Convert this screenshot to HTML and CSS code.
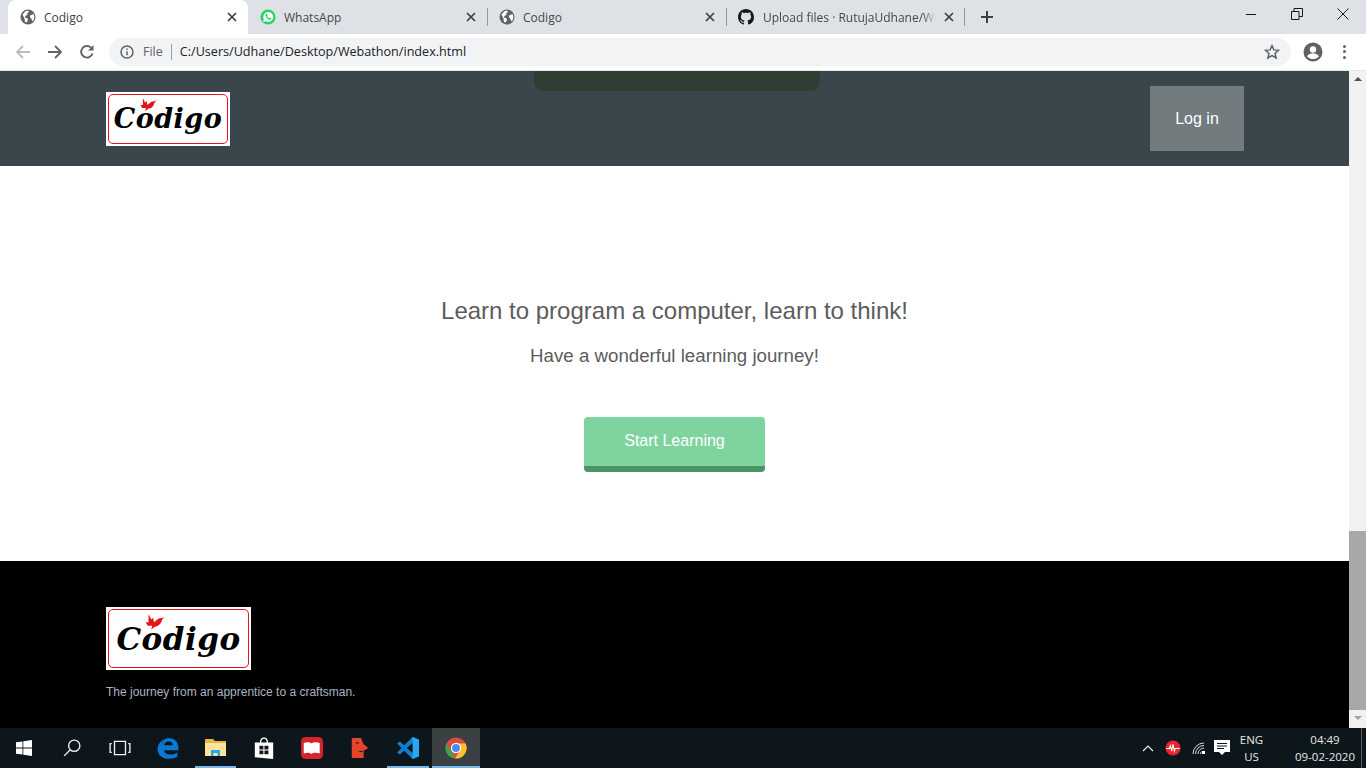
FILE: index.html
```html
<!DOCTYPE html>
<html lang="en">
<head>
<meta charset="utf-8">
<title>Codigo</title>
<link rel="stylesheet" href="styles.css">
</head>
<body>
<div class="tabstrip">
  <div class="tab active">
    <svg class="fav" viewBox="0 0 16 16"><use href="#globe"/></svg>
    <span class="tab-title">Codigo</span>
    <svg class="tab-x" viewBox="0 0 10 10"><path d="M1 1l8 8M9 1l-8 8"/></svg>
  </div>
  <div class="tab">
    <svg class="fav" viewBox="0 0 16 16"><circle cx="8" cy="8" r="7.6" fill="#25d366"/><path d="M3 13l.8-2.9A5 5 0 1 1 5.800 12.300z" fill="#fff"/><path d="M6.200 4.800c-.9.600-.9 2 .2 3.500 1.200 1.700 2.800 2.700 4 2.300.7-.3 1.100-1 .9-1.400l-1.400-.8-.7.700c-.8-.2-1.700-1.100-2.100-2.100l.6-.7-.7-1.500z" fill="#25d366"/></svg>
    <span class="tab-title">WhatsApp</span>
    <svg class="tab-x" viewBox="0 0 10 10"><path d="M1 1l8 8M9 1l-8 8"/></svg>
  </div>
  <div class="tab sep">
    <svg class="fav" viewBox="0 0 16 16"><use href="#globe"/></svg>
    <span class="tab-title">Codigo</span>
    <svg class="tab-x" viewBox="0 0 10 10"><path d="M1 1l8 8M9 1l-8 8"/></svg>
  </div>
  <div class="tab sep end">
    <svg class="fav" viewBox="0 0 16 16"><path fill="#16181a" d="M8 0C3.580 0 0 3.580 0 8c0 3.540 2.290 6.530 5.470 7.590.4.070.55-.17.55-.38 0-.19-.01-.82-.01-1.490-2.010.37-2.530-.49-2.690-.94-.09-.23-.48-.94-.82-1.130-.28-.15-.68-.52-.01-.53.63-.01 1.080.58 1.230.82.720 1.210 1.870.870 2.330.660.070-.520.280-.870.510-1.070-1.780-.2-3.640-.890-3.640-3.950 0-.870.310-1.590.820-2.150-.080-.2-.360-1.020.080-2.120 0 0 .670-.210 2.200.820.640-.180 1.320-.270 2-.270s1.360.090 2 .270c1.530-1.040 2.200-.820 2.200-.820.440 1.100.160 1.920.080 2.120.510.560.820 1.270.820 2.150 0 3.070-1.870 3.750-3.650 3.950.290.250.540.730.540 1.480 0 1.070-.01 1.930-.01 2.200 0 .210.150.460.550.380A8.010 8.010 0 0 0 16 8c0-4.420-3.580-8-8-8z"/></svg>
    <span class="tab-title clip">Upload files · RutujaUdhane/Web</span>
    <svg class="tab-x" viewBox="0 0 10 10"><path d="M1 1l8 8M9 1l-8 8"/></svg>
  </div>
  <svg class="newtab" viewBox="0 0 12 12"><path d="M6 0v12M0 6h12"/></svg>
  <div class="winctl">
    <svg class="wc" viewBox="0 0 12 12"><path d="M1 6.500h10"/></svg>
    <svg class="wc" viewBox="0 0 12 12"><path d="M.5 3.500h7.500v8h-7.500zM3 3.500v-3h8.500v8h-3.500"/></svg>
    <svg class="wc" viewBox="0 0 12 12"><path d="M.5 .5l11 11M11.500 .5l-11 11"/></svg>
  </div>
</div>

<div class="toolbar">
  <svg class="nav back" viewBox="0 0 16 16"><path d="M15 8H2M8 2L2 8l6 6"/></svg>
  <svg class="nav fwd" viewBox="0 0 16 16"><path d="M1 8h13M8 2l6 6-6 6"/></svg>
  <svg class="nav reload" viewBox="0 0 16 16"><path d="M13.500 9.500A5.800 5.800 0 1 1 12 3.600"/><path class="solid" d="M14.500 1v5.500H9z"/></svg>
  <div class="omnibox">
    <svg class="info" viewBox="0 0 14 14"><circle cx="7" cy="7" r="6"/><path d="M7 6.200v4M7 3.500v1.500"/></svg>
    <span class="file">File</span>
    <span class="omni-sep"></span>
    <span class="url">C:/Users/Udhane/Desktop/Webathon/index.html</span>
    <svg class="star" viewBox="0 0 16 16"><path d="M8 1.600l1.900 4.300 4.600.4-3.500 3.100 1.100 4.600L8 11.600l-4.100 2.400L5 9.400 1.500 6.300l4.600-.4z"/></svg>
  </div>
  <svg class="avatar" viewBox="0 0 20 20"><circle cx="10" cy="10" r="9.500" fill="#5f6368"/><circle cx="10" cy="7.500" r="3.200" fill="#fff"/><path d="M4 14.200c1.500-2.200 3.800-2.900 6-2.900s4.500.7 6 2.900c-1.400 1.800-3.600 2.900-6 2.900s-4.600-1.100-6-2.900z" fill="#fff"/></svg>
  <div class="menu"><i></i><i></i><i></i></div>
</div>

<div class="viewport">
  <div class="page">
    <header class="site-head">
      <div class="dropdown"></div>
      <div class="logo logo-sm">
        <span class="logo-text">Codigo</span>
        <svg class="bird" viewBox="0 0 24 22"><path fill="#e3141c" d="M6 0l3 6 2-2 1 5 5-4 5-1 2-1-3 3c-1 5-4 7-8 8l-4 3 1-4-5 0-2-4 3 0z"/></svg>
      </div>
      <button class="login">Log in</button>
    </header>
    <main class="hero">
      <h2 class="hero-title">Learn to program a computer, learn to think!</h2>
      <p class="hero-sub">Have a wonderful learning journey!</p>
      <a class="start">Start Learning</a>
    </main>
    <footer class="site-foot">
      <div class="logo logo-lg">
        <span class="logo-text">Codigo</span>
        <svg class="bird" viewBox="0 0 24 22"><path fill="#e3141c" d="M6 0l3 6 2-2 1 5 5-4 5-1 2-1-3 3c-1 5-4 7-8 8l-4 3 1-4-5 0-2-4 3 0z"/></svg>
      </div>
      <p class="tagline">The journey from an apprentice to a craftsman.</p>
    </footer>
  </div>
  <div class="scrollbar">
    <span class="arrow up"></span>
    <div class="track"><div class="thumb"></div></div>
    <span class="arrow down"></span>
  </div>
</div>

<div class="taskbar">
  <div class="tb-cell start-btn"><svg viewBox="0 0 16 16"><path fill="#fff" d="M0 2.300l6.500-.9v6.200H0zM7.300 1.300L16 0v7.600H7.300zM0 8.400h6.500v6.200L0 13.700zM7.300 8.400H16V16l-8.700-1.200z"/></svg></div>
  <div class="tb-cell"><svg viewBox="0 0 16 16" class="line"><circle cx="10" cy="6" r="5"/><path d="M6.300 9.700L1 15"/></svg></div>
  <div class="tb-cell"><svg viewBox="0 0 20 14" class="line wide"><path d="M5 1h10v12H5zM2.500 3H1v8h1.500M17.500 3H19v8h-1.500"/></svg></div>
  <div class="tb-cell"><svg viewBox="0 0 20 20"><path fill="#0a78d4" d="M10.500 1c5.500 0 9 3.700 9 9.500v1.500H6.500c.4 2.600 2.500 4 5.200 4 2.300 0 4.500-.6 6.800-2v4c-2.100 1.200-4.500 1.800-7.500 1.800C4.600 19.800 .5 16 .5 10.800c0-1.500.4-3 1.300-4.500C3 4 5.500 2.500 7.500 2 5.800 3.200 4.800 4.600 4.500 6c1.500-1.200 3.500-1.500 5-1.500-1.800 0-3 1.700-3 3h8c0-2.500-1.800-3.700-4-3.500C9 4 7 4.500 5 6 5.700 3 7.500 1 10.500 1z"/></svg></div>
  <div class="tb-cell open"><svg viewBox="0 0 22 20"><path fill="#e6b84c" d="M0 1h8l2 2h11v15H0z"/><path fill="#ffe39a" d="M0 5h21v13H0z"/><path fill="#29a8e0" d="M6 18v-6h9v6h-2.500v-3h-4v3z"/></svg></div>
  <div class="tb-cell"><svg viewBox="0 0 20 24"><path fill="#fff" d="M0 6h5.500c0-3.500 1.800-5.500 4.500-5.500s4.500 2 4.500 5.500H20v18L0 22zM7 6h6c0-2.500-1.200-4-3-4s-3 1.500-3 4z"/><path fill="#12191d" d="M5 9.500h4.300v4H5zM10.500 9.500h4.300v4h-4.300zM5 14.800h4.300v4H5zM10.500 14.800h4.300v4h-4.300z"/></svg></div>
  <div class="tb-cell"><svg viewBox="0 0 20 20"><rect width="20" height="20" rx="4" fill="#d5242b"/><path fill="#fff" d="M2.500 5.500c2.500-1 5.500-1 7 .5 1.500-1.500 4.500-1.500 7.500-.5v9.500c-3-1-6-.8-7.500.5-1.500-1.300-4.500-1.500-7-.5z"/></svg></div>
  <div class="tb-cell"><svg viewBox="0 0 20 24"><path fill="#e2452a" d="M1 1h10l3 7 5 4-5 3v8H1z"/><path fill="#3b1a12" d="M5 6.500c1-1.300 3-1.300 4 0-1 .8-3 .8-4 0zM8 15c2 .5 4 .5 6 0-1 2-5 2-6 0z"/></svg></div>
  <div class="tb-cell open-blue"><svg viewBox="0 0 24 24"><path fill="#0e7fd0" d="M17 0l7 3v18l-7 3-9-9-5 4-3-2 5-5-5-5 3-2 5 4z"/><path fill="#29a9ee" d="M17 6.500L10.500 12 17 17.500z"/><path fill="#2ca6ec" d="M17 0l7 3v18l-7 3z"/><path fill="#0a1419" d="M17 6.500L10.500 12 17 17.500z"/></svg></div>
  <div class="tb-cell active-app"><svg viewBox="0 0 24 24"><circle cx="12" cy="12" r="11.500" fill="#de4a3b"/><path fill="#2da94f" d="M1.600 7L7 16.500l4 7A11.500 11.500 0 0 1 1.600 7z"/><path fill="#fbc02d" d="M12 7h10.400A11.500 11.500 0 0 1 11 23.500L17 14z"/><circle cx="12" cy="12" r="5.600" fill="#fff"/><circle cx="12" cy="12" r="4.300" fill="#4a89f3"/></svg></div>
  <div class="tray">
    <svg class="chev" viewBox="0 0 12 7"><path d="M1 6l5-5 5 5"/></svg>
    <svg class="pulse" viewBox="0 0 18 18"><circle cx="9" cy="9" r="8.500" fill="#e8252c"/><path d="M1.500 9.500h3.500l1-3 1.500 6 1.500-8 1.500 8 1-3h5" fill="none" stroke="#fff" stroke-width="1.200"/></svg>
    <svg class="wifi" viewBox="0 0 14 14"><path d="M1 13a11 11 0 0 1 11-11M3.500 13a8.500 8.500 0 0 1 8.500-8.500M6 13a6 6 0 0 1 6-6M8.500 13a3.500 3.500 0 0 1 1-2.500" fill="none" stroke="#d8d8d8" stroke-width="1"/><rect x="10" y="10" width="3" height="3" fill="#fff"/></svg>
    <svg class="note" viewBox="0 0 16 16"><path fill="#fff" d="M0 0h16v12h-5l-3 3-3-3H0z"/><path stroke="#0b1418" stroke-width="1" d="M3 3.500h10M3 6h10M3 8.500h7"/></svg>
    <div class="lang">ENG<br>US</div>
    <div class="clock">04:49<br>09-02-2020</div>
    <span class="peek"></span>
  </div>
</div>

<svg class="defs" aria-hidden="true"><defs><g id="globe"><circle cx="8" cy="8" r="7.500" fill="#5f6368"/><path fill="#fff" d="M2.500 5.500l3-3.300 2.500-.7 1 1.500L7 4.500 7.500 6l-2 .8-.5 1.800 2.500.9.500 1.500-1.500 2.500-1.500-.5-.5-3.500zM10 6.500l3.500-1.500.8 2.500-.3 3-1.500 2-1-2.500-1.500-2z"/></g></defs></svg>
</body>
</html>
```
FILE: styles.css
```css
* { box-sizing: border-box; }
html, body { margin: 0; height: 768px; overflow: hidden; }
body { display: flex; flex-direction: column; width: 1366px; font-family: "Liberation Sans", Arial, sans-serif; background: #fff; }
.defs { width: 0; height: 0; position: absolute; }

.tabstrip { height: 34px; background: #dee1e6; display: flex; align-items: stretch; padding-left: 8px; flex: none; }
.tab { width: 239px; display: flex; align-items: center; padding: 0 11px 0 12px; position: relative; font: 12px "Open Sans", "Noto Sans", sans-serif; color: #45484c; }
.tab.active { width: 240px; background: #fff; border-radius: 8px 8px 0 0; color: #3c4043; }
.tab.sep::before { content: ""; position: absolute; left: 0; top: 8px; height: 18px; width: 1px; background: #94979c; }
.tab.end::after { content: ""; position: absolute; right: 0; top: 8px; height: 18px; width: 1px; background: #94979c; }
.fav { width: 16px; height: 16px; flex: none; }
.tab-title { flex: 1; margin-left: 8px; white-space: nowrap; overflow: hidden; }
.tab-title.clip { margin-left: 9px; font-size: 12px; -webkit-mask-image: linear-gradient(90deg, #000 92%, transparent); mask-image: linear-gradient(90deg, #000 92%, transparent); }
.tab-x { width: 10px; height: 10px; flex: none; margin-left: 8px; fill: none; stroke: #3c4043; stroke-width: 1.700; }
.newtab { width: 12px; height: 12px; margin: 11px 0 0 16px; fill: none; stroke: #3c4043; stroke-width: 2; flex: none; }
.winctl { margin-left: auto; display: flex; align-items: flex-start; }
.wc { width: 12px; height: 12px; margin: 8px 17px 0; fill: none; stroke: #16181a; stroke-width: 1; flex: none; }

.toolbar { height: 37px; background: #fff; border-bottom: 1px solid #e4e5e7; display: flex; align-items: center; flex: none; padding-bottom: 1px; }
.nav { width: 16px; height: 16px; flex: none; fill: none; stroke: #5f6368; stroke-width: 1.800; margin-left: 16px; }
.nav.back { stroke: #b9bcc0; margin-left: 15px; }
.nav.reload { stroke-width: 1.900; }
.nav .solid { fill: #5f6368; stroke: none; }
.omnibox { width: 1182px; height: 28px; margin-left: 14px; background: #f1f3f4; border-radius: 14px; display: flex; align-items: center; padding: 0 11px 0 11px; font: 13px "Open Sans", "Noto Sans", sans-serif; }
.info { width: 14px; height: 14px; fill: none; stroke: #5f6368; stroke-width: 1.500; flex: none; }
.file { margin-left: 9px; color: #5f6368; font-size: 12.500px; }
.omni-sep { width: 1px; height: 16px; background: #9aa0a6; margin: 0 8px; }
.url { color: #202124; flex: 1; font-size: 12.600px; }
.star { width: 16px; height: 16px; fill: none; stroke: #5f6368; stroke-width: 1.500; flex: none; }
.avatar { width: 20px; height: 20px; margin-left: 12px; flex: none; }
.menu { display: flex; flex-direction: column; gap: 2.500px; margin-left: 20px; flex: none; }
.menu i { width: 3px; height: 3px; border-radius: 50%; background: #5f6368; display: block; }

.viewport { flex: 1; min-height: 0; display: flex; }
.page { flex: 1; display: flex; flex-direction: column; }
.site-head { height: 95px; background: #3a464b; display: flex; align-items: center; justify-content: space-between; padding: 0 105px 0 106px; position: relative; }
.dropdown { position: absolute; left: 534px; top: 0; width: 286px; height: 20px; background: #2f3e32; border-radius: 0 0 9px 9px; }
.login { width: 94px; height: 65px; background: #727b7d; color: #fff; border: 0; font: 16px "Liberation Sans", Arial, sans-serif; padding: 0; }

.logo { background: #fff; position: relative; display: flex; align-items: center; justify-content: center; }
.logo::after { content: ""; position: absolute; inset: 2px; border: 1.500px solid #e8141c; border-radius: 5px; }
.logo-text { font-family: "DejaVu Serif", "Liberation Serif", serif; font-style: italic; font-weight: 700; color: #000; letter-spacing: .5px; }
.logo-sm { width: 124px; height: 54px; }
.logo-sm .logo-text { font-size: 27px; }
.logo-lg { width: 145px; height: 63px; }
.logo-lg .logo-text { font-size: 31px; }
.bird { position: absolute; }
.logo-sm .bird { width: 19px; height: 17px; left: 32px; top: 6px; }
.logo-lg .bird { width: 22px; height: 20px; left: 37px; top: 7px; }

.hero { height: 395px; background: #fff; display: flex; flex-direction: column; align-items: center; padding-top: 129px; color: #5c5c5c; }
.hero-title { margin: 0; font-size: 24px; line-height: 32px; font-weight: 400; }
.hero-sub { margin: 15px 0 0; font-size: 18.700px; line-height: 28px; }
.start { display: block; margin-top: 47px; width: 181px; height: 55px; background: #7ed49f; border-bottom: 6px solid #4a9467; border-radius: 4px; color: #fff; font-size: 16px; line-height: 47px; text-align: center; }

.site-foot { flex: 1; background: #000; padding: 46px 106px 0; }
.tagline { margin: 15px 0 0; font-size: 12px; line-height: 14px; color: #a9b4c2; }

.scrollbar { width: 17px; background: #f1f1f1; display: flex; flex-direction: column; align-items: center; flex: none; }
.arrow { height: 17px; flex: none; width: 0; border: 4px solid transparent; }
.arrow.up { border-bottom: 4px solid #505050; border-top-width: 0; height: 0; margin: 6px 0 7px; }
.arrow.down { border-top: 4px solid #a3a3a3; border-bottom-width: 0; height: 0; margin: 3px 0 8px; }
.track { flex: 1; width: 100%; padding-top: 443px; padding-bottom: 3px; display: flex; flex-direction: column; }
.thumb { flex: 1; background: #a8a8a8; }

.taskbar { height: 40px; background: #0c161b; display: flex; align-items: stretch; flex: none; color: #e8e8e8; }
.tb-cell { width: 48px; display: flex; align-items: center; justify-content: center; flex: none; position: relative; }
.tb-cell svg { width: 22px; height: 22px; }
.tb-cell svg.line { fill: none; stroke: #f2f2f2; stroke-width: 1.200; width: 18px; height: 18px; }
.tb-cell svg.wide { width: 22px; height: 16px; }
.start-btn svg { width: 16px; height: 16px; }
.tb-cell.open::after, .tb-cell.open-blue::after, .tb-cell.active-app::after { content: ""; position: absolute; left: 3px; right: 3px; bottom: 0; height: 2px; background: #76b9ed; }
.tb-cell.open::after { right: 0; left: 3px; width: 41px; }
.tb-cell.active-app { background: #3b4043; }
.tb-cell.active-app::after { left: 0; right: 0; }
.tray { margin-left: auto; display: flex; align-items: center; position: relative; font: 12px "Open Sans", "Noto Sans", sans-serif; text-align: center; }
.chev { width: 12px; height: 7px; fill: none; stroke: #eee; stroke-width: 1.200; flex: none; }
.pulse { width: 16px; height: 16px; margin-left: 11px; flex: none; }
.wifi { width: 14px; height: 14px; margin-left: 11px; flex: none; }
.note { width: 16px; height: 16px; margin-left: 8px; flex: none; }
.lang { margin-left: 9px; width: 42px; line-height: 17px; padding-right: 16px; width: 41px; font-size: 11.500px; }
.clock { width: 72px; line-height: 17px; font-size: 11.500px; margin-left: 9px; }
.peek { width: 1px; height: 100%; margin-left: 0; background: #566065; margin-right: 4px; }
```
